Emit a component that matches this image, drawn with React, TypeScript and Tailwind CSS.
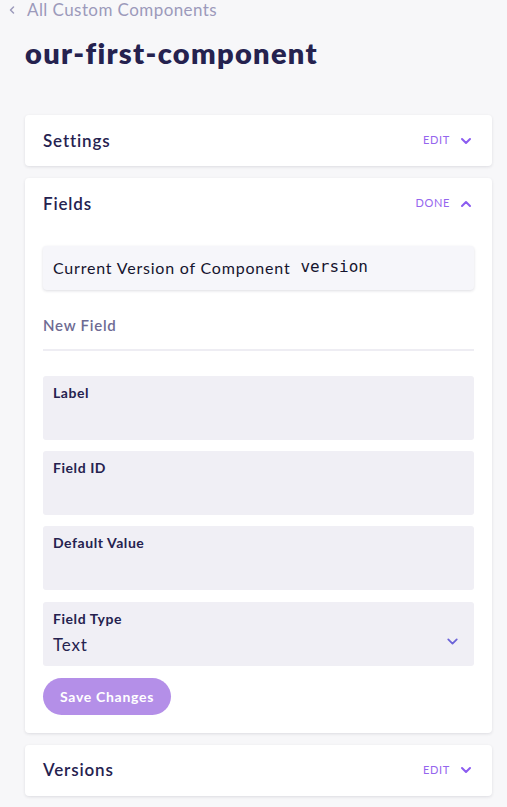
import { ChevronDown, ChevronLeft, ChevronUp } from 'lucide-react';

const ink = 'text-[#25224f]';

function CardHeader({ title, action, open }: { title: string; action: string; open?: boolean }) {
  return (
    <div className="flex items-center justify-between h-[51px] pl-[18px] pr-[18px]">
      <span className={`text-[17px] font-semibold tracking-[0.05em] ${ink}`}>{title}</span>
      <span className="flex items-center gap-[8px] text-[11px] tracking-[0.06em] text-[#9466ee]">
        {action}
        {open ? (
          <ChevronUp size={16} strokeWidth={3} className="text-[#8b5cf0]" />
        ) : (
          <ChevronDown size={16} strokeWidth={3} className="text-[#8b5cf0]" />
        )}
      </span>
    </div>
  );
}

function InputBox({ label, children }: { label: string; children?: React.ReactNode }) {
  return (
    <div className="h-[64px] rounded-[3px] bg-[#f0eff5] px-[10px] pt-[8px]">
      <div className={`text-[14px] font-bold leading-[18px] tracking-[0.04em] ${ink}`}>{label}</div>
      {children}
    </div>
  );
}

export default function App() {
  return (
    <div className="min-h-[807px] bg-[#f7f7f9] font-['Lato','Noto_Sans',sans-serif] overflow-hidden">
      <div className="flex items-center gap-[9px] pl-[6px] pt-[1px] h-[19px] text-[17px] tracking-[0.025em] text-[#9c9abb]">
        <ChevronLeft size={12} strokeWidth={3} />
        <span className="leading-[16px]">All Custom Components</span>
      </div>
      <h1 className={`pl-[25px] mt-[16px] text-[29px] font-extrabold leading-[36px] tracking-[0.045em] ${ink}`}>
        our-first-component
      </h1>

      <div className="mx-[25px] mt-[44px] flex flex-col gap-[12px] w-[467px]">
        <div className="rounded-[4px] bg-white shadow-[0_1px_3px_rgba(30,30,60,0.12)]">
          <CardHeader title="Settings" action="EDIT" />
        </div>

        <div className="rounded-[4px] bg-white shadow-[0_1px_3px_rgba(30,30,60,0.12)]">
          <CardHeader title="Fields" action="DONE" open />
          <div className="px-[18px] pt-[17px] pb-[18px]">
            <div className="flex items-center h-[44px] rounded-[4px] bg-[#f6f6fa] shadow-[0_1px_3px_rgba(30,30,60,0.15)] px-[10px] text-[16px] tracking-[0.05em] text-[#15142e]">
              Current Version of Component
              <span className="ml-[10px] font-['DejaVu_Sans_Mono',monospace] text-[16px] tracking-normal -mt-[3px]">version</span>
            </div>
            <div className="mt-[24px] pb-[12px] border-b-2 border-[#eeedf3] text-[15px] font-semibold tracking-[0.05em] text-[#6e6b93]">
              New Field
            </div>
            <div className="mt-[25px] flex flex-col gap-[11.4px]">
              <InputBox label="Label" />
              <InputBox label="Field ID" />
              <InputBox label="Default Value" />
              <InputBox label="Field Type">
                <div className="flex items-center justify-between mt-[4px] pr-[3px]">
                  <span className={`text-[17px] tracking-[0.05em] ${ink}`}>Text</span>
                  <ChevronDown size={17} strokeWidth={2.5} className="text-[#6b63d8] -mt-[5px]" />
                </div>
              </InputBox>
            </div>
            <button
              type="button"
              className="mt-[12px] h-[37px] w-[128px] rounded-full bg-[#b48fe8] text-[14px] font-bold tracking-[0.05em] text-white"
            >
              Save Changes
            </button>
          </div>
        </div>

        <div className="rounded-[4px] bg-white shadow-[0_1px_3px_rgba(30,30,60,0.12)]">
          <CardHeader title="Versions" action="EDIT" />
        </div>
      </div>
    </div>
  );
}
